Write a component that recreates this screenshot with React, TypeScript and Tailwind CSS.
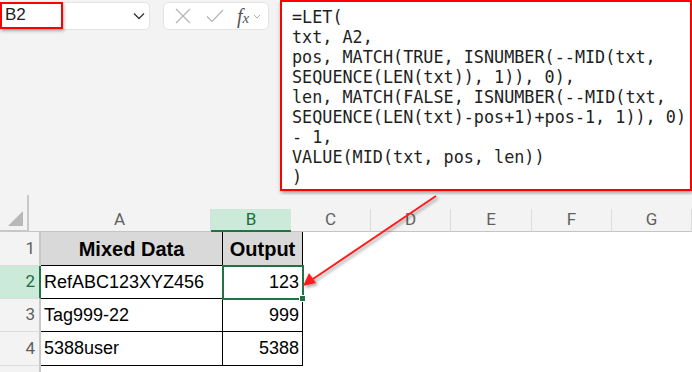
import React from "react";

// Excel-style window: name box, formula bar with a LET formula, and a small data table.
const FORMULA = [
  "=LET(",
  "txt, A2,",
  "pos, MATCH(TRUE, ISNUMBER(--MID(txt,",
  "SEQUENCE(LEN(txt)), 1)), 0),",
  "len, MATCH(FALSE, ISNUMBER(--MID(txt,",
  "SEQUENCE(LEN(txt)-pos+1)+pos-1, 1)), 0)",
  "- 1,",
  "VALUE(MID(txt, pos, len))",
  ")",
];

const COLS = [
  { id: "A", w: "w-[182px]" },
  { id: "B", w: "w-[80px]" },
  { id: "C", w: "w-[80px]" },
  { id: "D", w: "w-[80px]" },
  { id: "E", w: "w-[81px]" },
  { id: "F", w: "w-[80px]" },
  { id: "G", w: "w-[80px]" },
];

const ROWS = [
  { n: 1, a: "Mixed Data", b: "Output", h: "h-[34px]" },
  { n: 2, a: "RefABC123XYZ456", b: "123", h: "h-[33px]" },
  { n: 3, a: "Tag999-22", b: "999", h: "h-[33px]" },
  { n: 4, a: "5388user", b: "5388", h: "h-[34px]" },
];

export default function App() {
  return (
    <div className="relative w-[692px] h-[372px] overflow-hidden bg-white">
      <FormulaBar />
      <Grid />
      <Arrow />
    </div>
  );
}

function FormulaBar() {
  return (
    <div className="h-[195px] bg-[#f3f3f3] flex items-start">
      <div className="mt-[2px] w-[150px] h-[28px] bg-white rounded-[5px] border border-[#e3e3e3] flex items-center justify-between">
        <div className="-ml-px -mt-[2px] h-[27px] w-[63px] border-2 border-[#ff0000] shadow-[1px_2px_3px_rgba(0,0,0,0.3)] flex items-center pl-[3px] text-[17px] text-[#222] font-['Liberation_Sans',sans-serif]">
          B2
        </div>
        <svg width="12" height="8" viewBox="0 0 12 8" className="mr-[4px]">
          <path d="M1 1.5 L6 6.5 L11 1.5" fill="none" stroke="#333" strokeWidth="1.3" />
        </svg>
      </div>

      <div className="mt-[2px] ml-[13px] w-[106px] h-[28px] bg-white rounded-[5px] border border-[#e3e3e3] flex items-center pl-[11px]">
        <svg width="16" height="16" viewBox="0 0 16 16">
          <path d="M1 1 L15 15 M15 1 L1 15" stroke="#b4b4b4" strokeWidth="1.2" />
        </svg>
        <svg width="18" height="14" viewBox="0 0 18 14" className="ml-[15px]">
          <path d="M1 7.5 L6 12.5 L17 1" fill="none" stroke="#b4b4b4" strokeWidth="1.2" />
        </svg>
        <span className="ml-[13px] italic text-[20px] leading-none text-[#555] font-['Liberation_Serif',serif]">
          f<span className="text-[15px]">x</span>
        </span>
        <svg width="8" height="5" viewBox="0 0 8 5" className="ml-[4px]">
          <path d="M1 1 L4 4 L7 1" fill="none" stroke="#aaa" strokeWidth="1" />
        </svg>
      </div>

      <div className="ml-[11px] w-[412px] h-[191px] bg-white border-2 border-[#ff0000] shadow-[1px_2px_4px_rgba(0,0,0,0.35)] pl-[10px] pt-[5px]">
        {FORMULA.map((line, i) => (
          <div
            key={i}
            className="h-[20px] leading-[20px] text-[16.8px] text-[#1e1e1e] whitespace-pre font-['DejaVu_Sans_Mono',monospace]"
          >
            {line}
          </div>
        ))}
      </div>
    </div>
  );
}

function Grid() {
  return (
    <div className="relative font-['Liberation_Sans',sans-serif]">
      {/* column headers */}
      <div className="flex h-[37px] bg-[#f3f3f3]">
        <div className="relative w-[41px] border-r-2 border-b-2 border-[#c8c8c8]">
          <svg width="16" height="16" viewBox="0 0 16 16" className="absolute right-[3px] bottom-[3px]">
            <path d="M15 0 L15 15 L0 15 Z" fill="#b8b8b8" />
          </svg>
        </div>
        {COLS.map((c) => (
          <div key={c.id} className={`${c.w} shrink-0 flex flex-col justify-end`}>
            <div
              className={
                c.id === "B"
                  ? "h-[23px] bg-[#cbeada] border-b-2 border-[#217346] text-[#1b6b3e] flex items-center justify-center text-[17px] font-['Roboto',sans-serif]"
                  : "h-[23px] border-r border-b border-r-[#dcdcdc] border-b-[#c4c4c4] text-[#5f5f5f] flex items-center justify-center text-[17px] font-['Roboto',sans-serif]"
              }
            >
              {c.id}
            </div>
          </div>
        ))}
      </div>

      {/* rows */}
      {ROWS.map((r) => (
        <div key={r.n} className={`flex ${r.h}`}>
          <div
            className={
              r.n === 2
                ? "w-[41px] shrink-0 bg-[#cbeada] border-r-2 border-[#217346] border-b border-b-[#dcdcdc] flex items-center justify-end pr-[4px] text-[17px] text-[#1b6b3e] font-['Roboto',sans-serif]"
                : "w-[41px] shrink-0 bg-[#f3f3f3] border-r-2 border-[#c8c8c8] border-b border-b-[#dcdcdc] flex items-center justify-end pr-[4px] text-[17px] text-[#5f5f5f] font-['Roboto',sans-serif]"
            }
          >
            {r.n}
          </div>
          {r.n === 1 ? (
            <>
              <div className="w-[182px] shrink-0 bg-[#d9d9d9] border-r border-b border-black flex items-center justify-center text-[20px] font-bold text-black">
                {r.a}
              </div>
              <div className="w-[80px] shrink-0 bg-[#d9d9d9] border-r border-b border-black flex items-center justify-center text-[20px] font-bold text-black">
                {r.b}
              </div>
            </>
          ) : (
            <>
              <div className="w-[182px] shrink-0 border-r border-b border-black flex items-center pl-[3px] text-[18px] text-black">
                {r.a}
              </div>
              <div className="w-[80px] shrink-0 border-r border-b border-black flex items-center justify-end pr-[3px] text-[18px] text-black">
                {r.b}
              </div>
            </>
          )}
        </div>
      ))}
      <div className="flex h-[10px]">
        <div className="w-[41px] bg-[#f3f3f3] border-r-2 border-[#c8c8c8]" />
      </div>

      {/* active cell B2 */}
      <div className="absolute left-[222px] top-[70px] w-[82px] h-[35px] border-2 border-[#217346]" />
      <div className="absolute left-[299px] top-[100px] w-[7px] h-[7px] bg-[#217346] border border-white" />
    </div>
  );
}

function Arrow() {
  return (
    <svg width="692" height="372" className="absolute left-0 top-0 pointer-events-none">
      <defs>
        <filter id="sh" x="-10%" y="-10%" width="130%" height="130%">
          <feDropShadow dx="2" dy="2" stdDeviation="1.5" floodColor="#000" floodOpacity="0.35" />
        </filter>
      </defs>
      <g filter="url(#sh)">
        <line x1="436" y1="196" x2="313" y2="279" stroke="#ff1a1a" strokeWidth="2" />
        <path d="M303 286 L309 273 L316 283 Z" fill="#ff1a1a" />
      </g>
    </svg>
  );
}
